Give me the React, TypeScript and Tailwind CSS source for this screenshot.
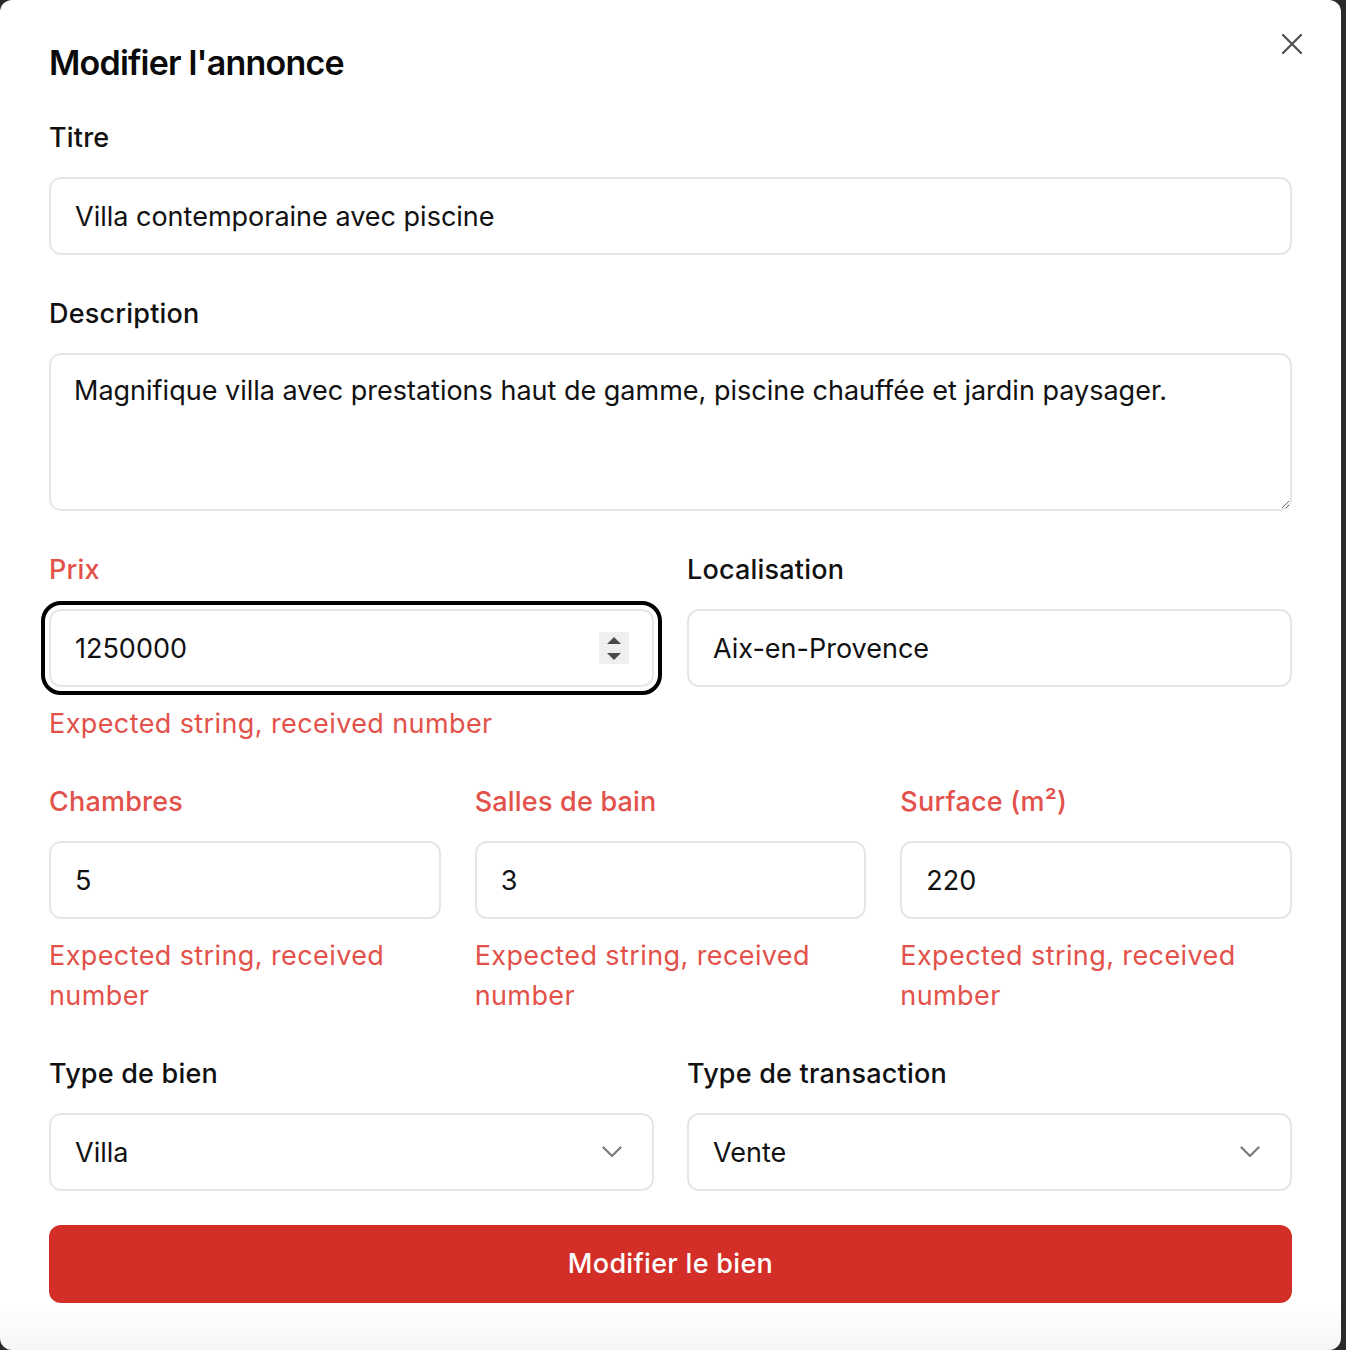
import React from "react";

const Label = (props: any) => (
  <label
    className={`block text-[27px] leading-[36px] font-medium tracking-[0.2px] mb-[21px] ${
      props.error ? "text-[#e2514a]" : "text-[#111]"
    }`}
  >
    {props.children}
  </label>
);

const ErrorText = (props: any) => (
  <p className="mt-[19px] text-[27px] leading-[36px] tracking-[0.4px] text-[#e2514a]">{props.children}</p>
);

const TextBox = (props: any) => (
  <div
    className={`relative h-[78px] w-full rounded-[12px] border-2 border-[#e6e6e6] bg-white px-[24px] pt-[3px] flex items-center text-[27px] text-[#111] ${
      props.focused ? "outline-4 outline-black outline-offset-[4px]" : ""
    }`}
  >
    <span>{props.value}</span>
    {props.children}
  </div>
);

const Spinner = () => (
  <div className="absolute right-[23px] top-[21px] w-[30px] h-[32px] bg-[#efefef] flex flex-col items-center justify-center gap-[9px]">
    <svg width="14" height="7" viewBox="0 0 14 7">
      <path d="M7 0 L14 7 L0 7 Z" fill="#4a4a4a" />
    </svg>
    <svg width="14" height="7" viewBox="0 0 14 7">
      <path d="M0 0 L14 0 L7 7 Z" fill="#4a4a4a" />
    </svg>
  </div>
);

const SelectBox = (props: any) => (
  <div className="h-[78px] w-full rounded-[12px] border-2 border-[#e6e6e6] bg-white pl-[24px] pr-[30px] flex items-center justify-between text-[27px] text-[#111]">
    <span className="pt-[2px]">{props.value}</span>
    <svg width="20" height="12" viewBox="0 0 20 12" fill="none">
      <path d="M1.5 1.5 L10 10 L18.5 1.5" stroke="#7a7a7a" strokeWidth="2.2" strokeLinecap="round" strokeLinejoin="round" />
    </svg>
  </div>
);

export default function App() {
  return (
    <div className="w-full h-[1350px] bg-[#2a2a2a] font-['Inter',sans-serif] overflow-hidden">
      <div className="relative h-[1350px] w-[1341px] rounded-[12px] bg-[linear-gradient(to_bottom,#ffffff_1305px,#f6f6f6)] px-[49px] pt-[41px]">
        <button className="absolute right-[39px] top-[34px]" aria-label="Fermer">
          <svg width="20" height="20" viewBox="0 0 20 20" fill="none">
            <path d="M1 1 L19 19 M19 1 L1 19" stroke="#555" strokeWidth="2.4" strokeLinecap="round" />
          </svg>
        </button>

        <h2 className="text-[34px] leading-[44px] font-semibold tracking-[-0.8px] text-[#0a0a0a]">
          Modifier l'annonce
        </h2>

        <div className="mt-[35px]">
          <Label>Titre</Label>
          <TextBox value="Villa contemporaine avec piscine" />
        </div>

        <div className="mt-[41px]">
          <Label>Description</Label>
          <textarea
            readOnly
            defaultValue="Magnifique villa avec prestations haut de gamme, piscine chauffée et jardin paysager."
            className="block h-[158px] w-full rounded-[12px] border-2 border-[#e6e6e6] bg-white px-[23px] py-[18px] text-[27px] leading-[36px] text-[#111] outline-none"
          />
        </div>

        <div className="mt-[41px] grid grid-cols-2 gap-x-[33px] items-start">
          <div>
            <Label error>Prix</Label>
            <TextBox value="1250000" focused>
              <Spinner />
            </TextBox>
            <ErrorText>Expected string, received number</ErrorText>
          </div>
          <div>
            <Label>Localisation</Label>
            <TextBox value="Aix-en-Provence" />
          </div>
        </div>

        <div className="mt-[42px] grid grid-cols-3 gap-x-[34px] items-start">
          {[
            ["Chambres", "5"],
            ["Salles de bain", "3"],
            ["Surface (m²)", "220"],
          ].map(([label, value]) => (
            <div key={label}>
              <Label error>{label}</Label>
              <TextBox value={value} />
              <p className="mt-[17px] pr-[30px] text-[27px] leading-[40px] tracking-[0.4px] text-[#e2514a]">
                Expected string, received number
              </p>
            </div>
          ))}
        </div>

        <div className="mt-[40px] grid grid-cols-2 gap-x-[33px]">
          <div>
            <Label>Type de bien</Label>
            <SelectBox value="Villa" />
          </div>
          <div>
            <Label>Type de transaction</Label>
            <SelectBox value="Vente" />
          </div>
        </div>

        <button className="mt-[34px] h-[78px] w-full rounded-[12px] bg-[#d32e28] pt-[1px] text-[27px] font-medium tracking-[0.3px] text-white">
          Modifier le bien
        </button>
      </div>
    </div>
  );
}
